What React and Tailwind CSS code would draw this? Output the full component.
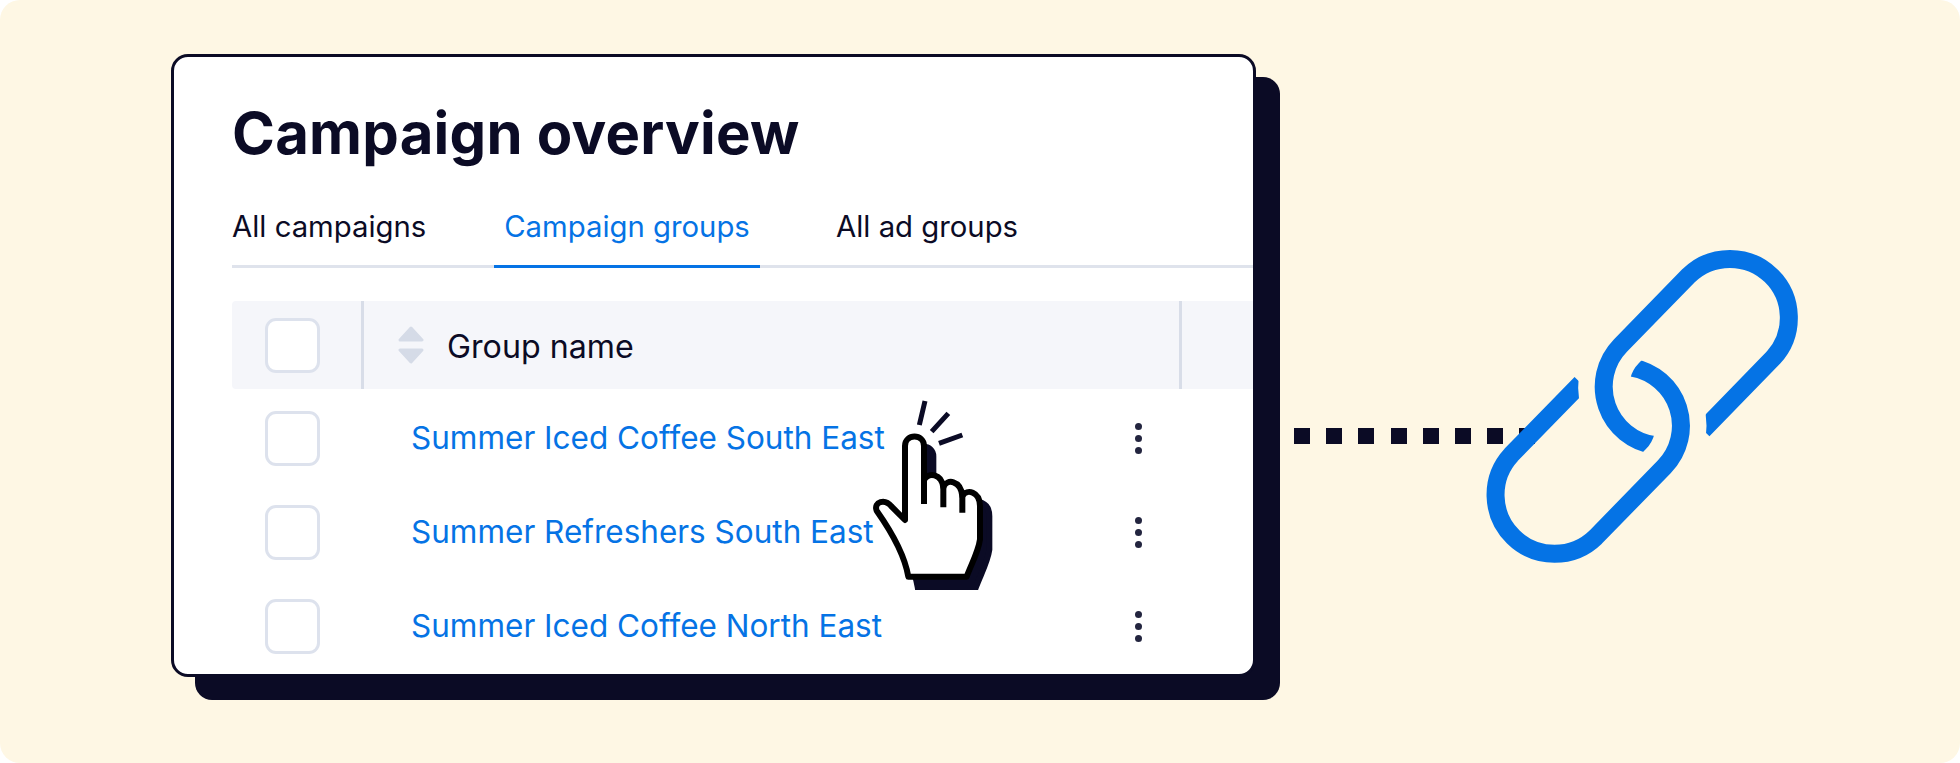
const rows = ['Summer Iced Coffee South East', 'Summer Refreshers South East', 'Summer Iced Coffee North East'];

const Checkbox = () => (
  <div className="w-[55px] h-[55px] shrink-0 rounded-[11px] border-[3px] border-[#DDE2ED] bg-white"></div>
);

const SortIcon = () => (
  <svg width="26" height="40" viewBox="0 0 26 40" className="shrink-0">
    <path d="M13 3 L24 15 L2 15 Z" fill="#D5DBE7" stroke="#D5DBE7" strokeWidth="3" strokeLinejoin="round" />
    <path d="M2 25 L24 25 L13 37 Z" fill="#D5DBE7" stroke="#D5DBE7" strokeWidth="3" strokeLinejoin="round" />
  </svg>
);

const Dots = () => (
  <div className="flex flex-col gap-[5px]">
    <span className="block w-[7px] h-[7px] rounded-full bg-[#23253F]"></span>
    <span className="block w-[7px] h-[7px] rounded-full bg-[#23253F]"></span>
    <span className="block w-[7px] h-[7px] rounded-full bg-[#23253F]"></span>
  </div>
);

const HAND_PATH =
  'M195 420 L195 198 C195 160 252 160 252 198 L252 300 C265 275 305 280 310 322 C320 295 362 300 367 348 C380 325 420 335 420 378 L420 478 C415 515 395 550 380 590 L205 590 C195 530 165 470 110 392 C100 365 135 355 155 380 Z';

const Hand = () => (
  <svg width="200" height="230" viewBox="0 0 600 690">
    {/* sparks */}
    <path d="M255 63 L238 135 M325 100 L275 155 M367 165 L297 190" stroke="#0B0B25" strokeWidth="15" fill="none" />
    {/* shadow */}
    <path d={HAND_PATH} transform="translate(28 31)" fill="#0B0B25" stroke="#0B0B25" strokeWidth="18" />
    {/* hand */}
    <path d={HAND_PATH} fill="#fff" stroke="#000" strokeWidth="18" strokeLinejoin="round" />
    <path d="M252 290 L252 372 M310 315 L310 382 M367 340 L367 398" stroke="#000" strokeWidth="18" fill="none" />
  </svg>
);

const LinkIcon = () => (
  <svg width="330" height="330" viewBox="1480 240 330 330" className="shrink-0 relative">
    <defs>
      <mask id="cutUpper" maskUnits="userSpaceOnUse" x="1480" y="240" width="330" height="330">
        <rect x="1480" y="240" width="330" height="330" fill="#fff" />
        <path d="M1636.4 368.5 A59 59 0 0 1 1664.2 466.9 L1595.6 537.2" fill="none" stroke="#000" strokeWidth="51" />
      </mask>
      <mask id="cutLower" maskUnits="userSpaceOnUse" x="1480" y="240" width="330" height="330">
        <rect x="1480" y="240" width="330" height="330" fill="#fff" />
        <path d="M1648.5 444 A59 59 0 0 1 1620.5 345.5 L1688.8 275.5" fill="none" stroke="#000" strokeWidth="51" />
      </mask>
    </defs>
    <path
      d="M1703 430 L1773.2 357.9 A59 59 0 0 0 1688.8 275.5 L1620.5 345.5 A59 59 0 0 0 1655 445.2"
      fill="none"
      stroke="#0573E5"
      strokeWidth="18"
      mask="url(#cutUpper)"
    />
    <path
      d="M1632 367.6 A59 59 0 0 1 1664.2 466.9 L1595.6 537.2 A59 59 0 0 1 1511.2 454.8 L1581 383.2"
      fill="none"
      stroke="#0573E5"
      strokeWidth="18"
      mask="url(#cutLower)"
    />
  </svg>
);

export default function App() {
  return (
    <div
      className="w-[1960px] h-[763px] bg-white overflow-hidden"
      style={{ fontFamily: 'Inter, "Liberation Sans", sans-serif' }}
    >
      <div className="w-full h-full rounded-[20px] bg-[#FEF7E4] flex items-start pl-[171px] pt-[54px]">
        {/* Card */}
        <div className="relative w-[1085px] h-[623px] shrink-0 rounded-[17px] border-[3px] border-[#0B0B25] bg-white shadow-[24px_23px_0_#0B0B25] pl-[58px] text-[#0B0B25]">
          <h1 className="mt-[41px] text-[58px] leading-[70px] font-bold tracking-[0.25px] whitespace-nowrap">Campaign overview</h1>

          {/* Tabs */}
          <div className="mt-[30px] h-[70px] pb-[10px] flex items-stretch border-b-[3px] border-[#DFE3EC] text-[29.3px] whitespace-nowrap">
            <div className="flex items-center w-[262px]">All campaigns</div>
            <div className="flex items-center justify-center w-[266px] -mb-[13px] pb-[10px] border-b-[3px] border-[#0573E5] text-[#0573E5]">
              Campaign groups
            </div>
            <div className="flex items-center ml-[76px]">All ad groups</div>
          </div>

          {/* Table header */}
          <div className="mt-[33px] h-[88px] flex items-center bg-[#F5F6FA] rounded-l-[4px] text-[32.2px]">
            <div className="w-[132px] h-full flex items-center pl-[33px] border-r-[3px] border-[#D8DDE8]">
              <Checkbox />
            </div>
            <div className="w-[818px] h-full flex items-center gap-[23px] pl-[34px] border-r-[3px] border-[#D8DDE8]">
              <SortIcon />
              <span className="pt-[4px]">Group name</span>
            </div>
          </div>

          {/* Rows */}
          <div className="mt-[2px] flex flex-col">
            {rows.map((name) => (
              <div key={name} className="h-[94px] flex items-center pl-[33px]">
                <Checkbox />
                <span className="ml-[91px] w-[724px] text-[31.5px] text-[#0573E5] whitespace-nowrap">{name}</span>
                <Dots />
              </div>
            ))}
          </div>

          {/* Pointer over the first row */}
          <div className="absolute left-[666px] top-[323px]">
            <Hand />
          </div>
        </div>

        {/* Connector and link */}
        <div className="ml-[38px] mt-[374px] flex gap-[16.2px] shrink-0">
          {[0, 1, 2, 3, 4, 5, 6, 7].map((i) => (
            <span key={i} className="block w-[16px] h-[16px] bg-[#0B0B25]"></span>
          ))}
        </div>
        <div className="-ml-[55.4px] mt-[186px] relative shrink-0">
          <LinkIcon />
        </div>
      </div>
    </div>
  );
}
